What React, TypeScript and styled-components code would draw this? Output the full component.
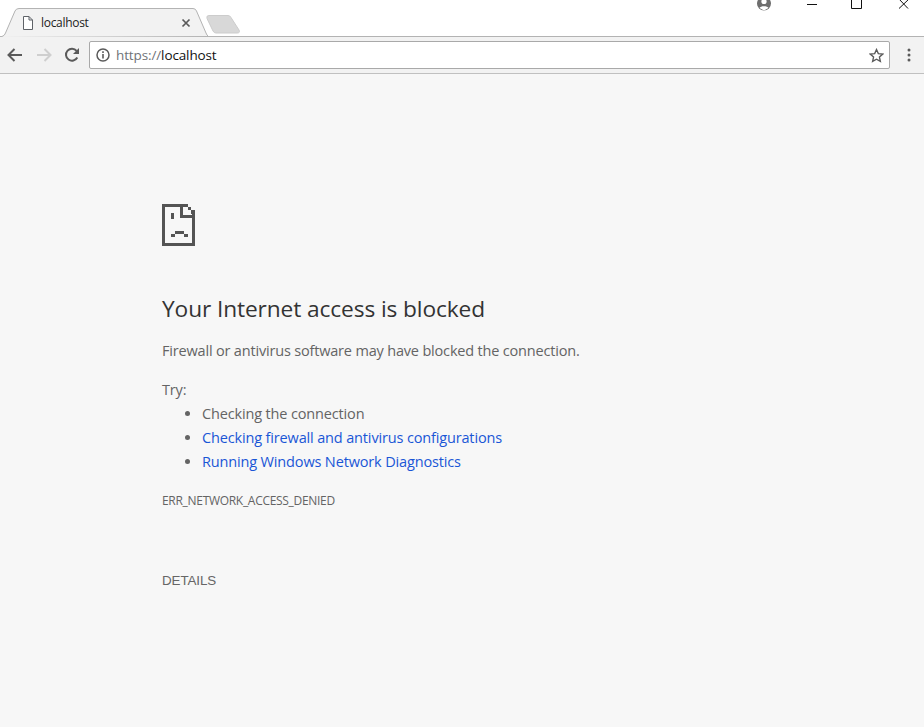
import React from "react";
import styled, { createGlobalStyle } from "styled-components";

const Global = createGlobalStyle`
  html, body { margin: 0; padding: 0; height: 100%; background: #f7f7f7; }
  #root { height: 100%; }
`;

const Page = styled.div`
  width: 924px;
  height: 727px;
  overflow: hidden;
  display: flex;
  flex-direction: column;
  font-family: "Open Sans", "Noto Sans", sans-serif;
  background: #f7f7f7;
`;

const TabStrip = styled.div`
  height: 37px;
  flex: none;
  background: #fff;
  display: flex;
  align-items: flex-start;
  border-bottom: 1px solid #b3b3b3;
  box-sizing: border-box;
  position: relative;
`;

const Tab = styled.div`
  position: relative;
  width: 208px;
  height: 37px;
  flex: none;
  display: flex;
  align-items: center;
  padding: 8px 17px 0 22px;
  box-sizing: border-box;
`;

const TabShape = styled.svg`
  position: absolute;
  left: 0;
  top: 0;
`;

const TabIcon = styled.svg`
  position: relative;
  flex: none;
`;

const TabTitle = styled.span`
  position: relative;
  margin-left: 7px;
  flex: 1;
  font-size: 12px;
  letter-spacing: -0.3px;
  color: #222;
`;

const TabClose = styled.svg`
  position: relative;
  flex: none;
`;

const NewTab = styled.svg`
  flex: none;
  margin: 15px 0 0 -2px;
`;

const WindowControls = styled.div`
  margin-left: auto;
  margin-right: 11px;
  display: flex;
  align-items: flex-start;
`;

const ControlIcon = styled.svg<{ $gap: number }>`
  display: block;
  margin-left: ${(p) => p.$gap}px;
`;

const Toolbar = styled.div`
  height: 37px;
  flex: none;
  background: #f2f2f2;
  border-bottom: 1px solid #c0c0c0;
  box-sizing: border-box;
  display: flex;
  align-items: center;
  padding: 0 13px 0 6px;
`;

const NavIcon = styled.svg<{ $gap: number }>`
  flex: none;
  margin-right: ${(p) => p.$gap}px;
`;

const Omnibox = styled.div`
  flex: 1;
  height: 28px;
  box-sizing: border-box;
  background: #fff;
  border: 1px solid #a9a9a9;
  border-radius: 2px;
  display: flex;
  align-items: center;
  padding: 0 5px 0 6px;
  font-size: 13.5px;
`;

const Url = styled.span`
  margin-left: 6px;
  flex: 1;
  color: #111;
  letter-spacing: -0.12px;
`;

const Scheme = styled.span`
  color: #6f7378;
`;

const MenuIcon = styled.svg`
  flex: none;
  margin-left: 17px;
`;

const Content = styled.main`
  flex: 1;
  padding: 130px 0 0 162px;
  color: #646464;
  font-size: 14.5px;
  letter-spacing: -0.18px;
`;

const SadFile = styled.svg`
  display: block;
  width: 33px;
  height: 42px;
  shape-rendering: crispEdges;
`;

const Heading = styled.h1`
  margin: 47px 0 0;
  font-size: 22.7px;
  line-height: 32px;
  font-weight: 400;
  letter-spacing: -0.1px;
  color: #333;
`;

const Lead = styled.p`
  margin: 14px 0 0;
  line-height: 24px;
`;

const TryLabel = styled.p`
  margin: 15px 0 0;
  line-height: 24px;
`;

const Suggestions = styled.ul`
  margin: 0;
  padding: 0 0 0 40px;
  list-style: disc;
  letter-spacing: -0.15px;
`;

const Suggestion = styled.li`
  line-height: 24px;
`;

const SuggestionLink = styled.a`
  color: #1a56d6;
  text-decoration: none;
`;

const ErrorCode = styled.div`
  margin-top: 19px;
  font-size: 12px;
  line-height: 16px;
  letter-spacing: -0.3px;
  color: #646464;
`;

const DetailsButton = styled.div`
  margin-top: 64px;
  font-family: "Liberation Sans", Arial, sans-serif;
  font-size: 13.4px;
  letter-spacing: -0.1px;
  line-height: 16px;
  color: #666;
`;

export default function App() {
  return (
    <Page>
      <Global />
      <TabStrip>
        <Tab>
          <TabShape width="208" height="37" viewBox="0 0 208 37">
            <path
              d="M0.5 37 L3 36 Q4.5 35.5 5.5 33 L15 11 Q16 8.5 19 8.5 L193 8.5 Q195.5 8.5 196.5 11 L206 33 Q207 35.5 208 36"
              fill="#f2f2f2"
              stroke="#b3b3b3"
              strokeWidth="1"
            />
          </TabShape>
          <TabIcon width="12" height="14" viewBox="0 0 12 14">
            <path d="M1.5 0.5 H7 L10.5 4 V13.5 H1.5 Z M7 0.5 V4 H10.5" fill="#fff" stroke="#5f6368" strokeWidth="1" />
          </TabIcon>
          <TabTitle>localhost</TabTitle>
          <TabClose width="10" height="10" viewBox="0 0 10 10">
            <path d="M1.5 1.5 L8.5 8.5 M8.5 1.5 L1.5 8.5" stroke="#5a5a5a" strokeWidth="1.7" />
          </TabClose>
        </Tab>
        <NewTab width="36" height="19" viewBox="0 0 36 19">
          <path d="M3 0.5 H22 Q24 0.5 25 2.5 L33 15 Q34.5 18 31 18 H10 Q8 18 7 16 L1 3.5 Q0 0.5 3 0.5 Z" fill="#d8d8d8" stroke="#cccccc" />
        </NewTab>
        <WindowControls>
          <ControlIcon $gap={0} width="16" height="11" viewBox="0 0 16 11">
            <circle cx="8" cy="3.5" r="7" fill="#6e6e6e" />
            <circle cx="8" cy="1.5" r="2.6" fill="#fff" />
            <path d="M3.5 8 C4.5 5.5 11.5 5.5 12.5 8 L8 10.5 Z" fill="#fff" />
          </ControlIcon>
          <ControlIcon $gap={35} width="10" height="6" viewBox="0 0 10 6">
            <path d="M0 4.5 H10" stroke="#111" strokeWidth="1" />
          </ControlIcon>
          <ControlIcon $gap={34} width="11" height="9" viewBox="0 0 11 9">
            <path d="M0.5 0 V8.5 H10.5 V0" fill="none" stroke="#111" strokeWidth="1" />
          </ControlIcon>
          <ControlIcon $gap={35} width="16" height="9" viewBox="0 0 16 9">
            <path d="M2 -1 L11 8.5 M12 -1 L2 8.5" stroke="#111" strokeWidth="1" />
          </ControlIcon>
        </WindowControls>
      </TabStrip>
      <Toolbar>
        <NavIcon $gap={13} width="17" height="16" viewBox="0 0 17 16">
          <path d="M16 8 H3 M8.5 2 L2.5 8 L8.5 14" fill="none" stroke="#5a5a5a" strokeWidth="2" />
        </NavIcon>
        <NavIcon $gap={11} width="17" height="16" viewBox="0 0 17 16">
          <path d="M1 8 H14 M8.5 2 L14.5 8 L8.5 14" fill="none" stroke="#cfcfcf" strokeWidth="2" />
        </NavIcon>
        <NavIcon $gap={9} width="16" height="16" viewBox="0 0 16 16">
          <path d="M13.3 10.5 A6 6 0 1 1 12.6 3.8" fill="none" stroke="#5a5a5a" strokeWidth="2" />
          <path d="M15 1 V7 H9 Z" fill="#5a5a5a" />
        </NavIcon>
        <Omnibox>
          <svg width="14" height="14" viewBox="0 0 14 14">
            <circle cx="7" cy="7" r="6" fill="none" stroke="#5a5a5a" strokeWidth="1.5" />
            <path d="M7 6 V10.5 M7 3.3 V5" stroke="#5a5a5a" strokeWidth="1.6" />
          </svg>
          <Url><Scheme>https://</Scheme>localhost</Url>
          <svg width="15" height="15" viewBox="0 0 24 24">
            <path d="M12 2.5 L14.9 9 L22 9.8 L16.7 14.5 L18.2 21.5 L12 17.9 L5.8 21.5 L7.3 14.5 L2 9.8 L9.1 9 Z" fill="none" stroke="#5a5a5a" strokeWidth="2.2" />
          </svg>
        </Omnibox>
        <MenuIcon width="4" height="14" viewBox="0 0 4 14">
          <circle cx="2" cy="2" r="1.5" fill="#5a5a5a" />
          <circle cx="2" cy="7" r="1.5" fill="#5a5a5a" />
          <circle cx="2" cy="12" r="1.5" fill="#5a5a5a" />
        </MenuIcon>
      </Toolbar>
      <Content>
        <SadFile viewBox="0 0 33 42">
          <path
            fill="#545454"
            d="M0 0 H26 V3 H3 V39 H30 V14 H33 V42 H0 Z
               M18 3 H21 V11 H33 V14 H18 Z
               M26 3 H29 V6 H26 Z
               M29 6 H33 V11 H30 V10 H29 Z
               M9 9 H12 V15 H9 Z
               M13 27 H22 V30 H26 V33 H22 V30 H13 V33 H9 V30 H13 Z"
          />
        </SadFile>
        <Heading>Your Internet access is blocked</Heading>
        <Lead>Firewall or antivirus software may have blocked the connection.</Lead>
        <TryLabel>Try:</TryLabel>
        <Suggestions>
          <Suggestion>Checking the connection</Suggestion>
          <Suggestion><SuggestionLink>Checking firewall and antivirus configurations</SuggestionLink></Suggestion>
          <Suggestion><SuggestionLink>Running Windows Network Diagnostics</SuggestionLink></Suggestion>
        </Suggestions>
        <ErrorCode>ERR_NETWORK_ACCESS_DENIED</ErrorCode>
        <DetailsButton>DETAILS</DetailsButton>
      </Content>
    </Page>
  );
}
